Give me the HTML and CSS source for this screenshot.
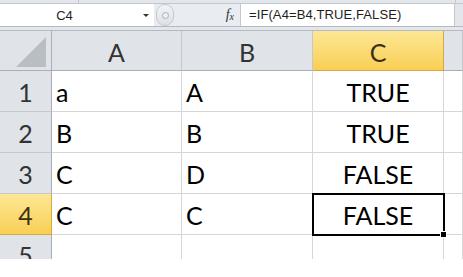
FILE: index.html
```html
<!DOCTYPE html>
<html lang="en">
<head>
    <meta charset="UTF-8">
    <title>Excel - IF</title>
    <link rel="stylesheet" href="styles.css">
</head>
<body>

<div class="ribbon-edge">
    <div class="ribbon-part ribbon-first"></div>
    <div class="ribbon-part ribbon-mid"></div>
    <div class="ribbon-part"></div>
</div>

<!-- Pasek formuły -->
<div class="formula-bar">
    <div class="name-box">
        <span class="name-text">C4</span>
        <span class="name-arrow"></span>
    </div>
    <div class="fx-zone">
        <div class="grip"><span class="grip-dot"></span></div>
        <span class="fx">f<sub>x</sub></span>
    </div>
    <div class="formula">=IF(A4=B4,TRUE,FALSE)</div>
    <div class="formula-end"></div>
</div>

<div class="bar-gap"></div>

<!-- Arkusz -->
<div class="sheet">
    <div class="corner"><span class="corner-tri"></span></div>
    <div class="col-head">A</div>
    <div class="col-head">B</div>
    <div class="col-head active">C</div>
    <div class="col-head"></div>

    <div class="row-head">1</div>
    <div class="cell">a</div>
    <div class="cell">A</div>
    <div class="cell center">TRUE</div>
    <div class="cell"></div>

    <div class="row-head">2</div>
    <div class="cell">B</div>
    <div class="cell">B</div>
    <div class="cell center">TRUE</div>
    <div class="cell"></div>

    <div class="row-head">3</div>
    <div class="cell">C</div>
    <div class="cell">D</div>
    <div class="cell center">FALSE</div>
    <div class="cell"></div>

    <div class="row-head active">4</div>
    <div class="cell">C</div>
    <div class="cell">C</div>
    <div class="cell center selected">FALSE</div>
    <div class="cell"></div>

    <div class="row-head last">5</div>
    <div class="cell last"></div>
    <div class="cell last"></div>
    <div class="cell last"></div>
    <div class="cell last"></div>
</div>

</body>
</html>
```

FILE: styles.css
```css
body {
    margin: 0;
    padding: 0;
    background-color: #ffffff;
    font-family: 'Lato', 'Open Sans', sans-serif;
    overflow: hidden;
}

/* Dolna krawędź wstążki */
.ribbon-edge {
    display: flex;
    height: 3px;
    background-color: #e3e7ec;
    border-bottom: 1px solid #c3c8cf;
}

.ribbon-part {
    flex: 1;
}

.ribbon-first {
    flex: 0 0 78px;
    border-right: 1px solid #c3c8cf;
}

.ribbon-mid {
    flex: 0 0 376px;
    border-right: 1px solid #c3c8cf;
}

/* Pasek formuły */
.formula-bar {
    display: flex;
    height: 22px;
    border-bottom: 1px solid #b5bac2;
    font-family: 'Liberation Sans', Arial, sans-serif;
    font-size: 13px;
    color: #1e1e1e;
}

.name-box {
    width: 154px;
    background-color: #ffffff;
    display: flex;
    align-items: center;
}

.name-text {
    flex: 1;
    text-align: center;
    padding-right: 14px;
}

.name-arrow {
    width: 0;
    height: 0;
    border-left: 3px solid transparent;
    border-right: 3px solid transparent;
    border-top: 3px solid #333;
    margin-right: 5px;
}

.fx-zone {
    width: 86px;
    background-color: #e9ecf0;
    display: flex;
    align-items: center;
    justify-content: space-between;
    padding-right: 6px;
    box-sizing: border-box;
}

.grip {
    width: 16px;
    height: 20px;
    margin-left: 2px;
    border: 1px solid #c4c9d0;
    border-radius: 9px;
    background: linear-gradient(#f2f4f7, #dde1e7);
    display: flex;
    align-items: center;
    justify-content: center;
}

.grip-dot {
    width: 5px;
    height: 5px;
    border-radius: 50%;
    border: 1px solid #aab0b8;
    background-color: #eef0f3;
}

.fx {
    font-family: 'Liberation Serif', 'Times New Roman', serif;
    font-style: italic;
    font-size: 14px;
    color: #333;
}

.fx sub {
    font-size: 10px;
    vertical-align: -1px;
}

.formula {
    flex: 1;
    background-color: #ffffff;
    border-left: 1px solid #c3c8cf;
    padding-left: 8px;
    line-height: 22px;
    letter-spacing: 0.1px;
}

.formula-end {
    width: 8px;
    background-color: #e3e7ec;
    border-left: 1px solid #c3c8cf;
}

.bar-gap {
    height: 3px;
    background-color: #e3e7ec;
    border-bottom: 1px solid #b5bac2;
}

/* Siatka arkusza */
.sheet {
    display: grid;
    grid-template-columns: 52px 130px 131px 131px 1fr;
    grid-template-rows: 40px 41px 41px 41px 41px 24px;
    font-size: 25px;
    color: #000;
}

.corner,
.col-head,
.row-head {
    background-color: #e0e3e8;
    color: #333;
    display: flex;
    align-items: center;
    justify-content: center;
    box-sizing: border-box;
}

.corner {
    border-right: 1px solid #a9afb8;
    border-bottom: 1px solid #a9afb8;
    position: relative;
}

.corner-tri {
    position: absolute;
    right: 5px;
    bottom: 3px;
    width: 0;
    height: 0;
    border-left: 30px solid transparent;
    border-bottom: 30px solid #b9bec5;
}

.col-head {
    border-right: 1px solid #c3c8cf;
    border-bottom: 1px solid #a9afb8;
    padding-top: 3px;
}

.row-head {
    border-right: 1px solid #a9afb8;
    border-bottom: 1px solid #c3c8cf;
    padding-top: 2px;
}

.col-head.active,
.row-head.active {
    background: linear-gradient(#fde795, #f9cf55);
    color: #3c2f14;
    border-color: #d8a840;
}

.row-head.last {
    align-items: flex-start;
    padding-top: 5px;
    overflow: hidden;
    border-bottom: none;
}

.cell {
    border-right: 1px solid #d6d6d6;
    border-bottom: 1px solid #d6d6d6;
    box-sizing: border-box;
    display: flex;
    align-items: center;
    padding-left: 4px;
    padding-top: 2px;
    line-height: 30px;
}

.cell.center {
    justify-content: center;
    padding-left: 0;
}

.cell.last {
    border-bottom: none;
}

/* Zaznaczona komórka C4 */
.selected {
    outline: 2px solid #000;
    outline-offset: -1px;
    position: relative;
    z-index: 1;
}

.selected::after {
    content: "";
    position: absolute;
    right: -4px;
    bottom: -4px;
    width: 5px;
    height: 5px;
    background-color: #000;
    border: 1px solid #fff;
}
```
